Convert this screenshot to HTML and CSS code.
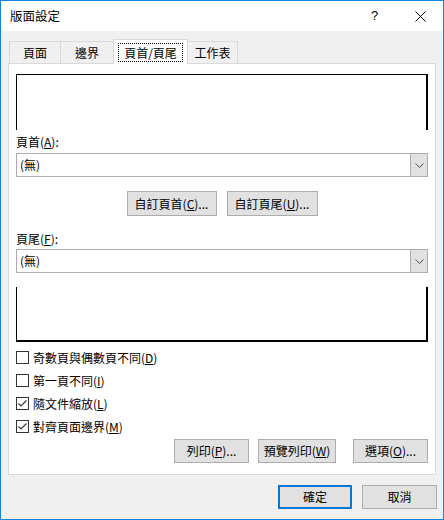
FILE: index.html
```html
<!DOCTYPE html>
<html lang="zh-Hant">
<head>
<meta charset="utf-8">
<title>版面設定</title>
<link rel="stylesheet" href="styles.css">
</head>
<body>
<div class="window">
  <div class="titlebar">
    <span class="title">版面設定</span>
    <span class="help">?</span>
    <span class="close">
      <svg width="11" height="11" viewBox="0 0 11 11"><path d="M0.5 0.5 L10.5 10.5 M10.5 0.5 L0.5 10.5" stroke="#000" stroke-width="1" fill="none"/></svg>
    </span>
  </div>
  <div class="content">
    <div class="tabs">
      <div class="tab t1">頁面</div>
      <div class="tab t2">邊界</div>
      <div class="tab t3 active"><span class="focus">頁首/頁尾</span></div>
      <div class="tab t4">工作表</div>
    </div>
    <div class="panel">
      <div class="preview header-preview"></div>
      <div class="label label-head">頁首(<u>A</u>):</div>
      <div class="select">
        <span class="select-text">(無)</span>
        <span class="select-btn">
          <svg width="9" height="5" viewBox="0 0 9 5"><path d="M0.5 0.5 L4.5 4.5 L8.5 0.5" stroke="#555" stroke-width="1" fill="none"/></svg>
        </span>
      </div>
      <div class="custom-row">
        <div class="btn custom">自訂頁首(<u>C</u>)...</div>
        <div class="btn custom">自訂頁尾(<u>U</u>)...</div>
      </div>
      <div class="label label-foot">頁尾(<u>F</u>):</div>
      <div class="select select-foot">
        <span class="select-text">(無)</span>
        <span class="select-btn">
          <svg width="9" height="5" viewBox="0 0 9 5"><path d="M0.5 0.5 L4.5 4.5 L8.5 0.5" stroke="#555" stroke-width="1" fill="none"/></svg>
        </span>
      </div>
      <div class="preview footer-preview"></div>
      <div class="checks">
        <div class="check"><span class="box"></span><span>奇數頁與偶數頁不同(<u>D</u>)</span></div>
        <div class="check"><span class="box"></span><span>第一頁不同(<u>I</u>)</span></div>
        <div class="check"><span class="box"><svg width="11" height="11" viewBox="0 0 11 11"><path d="M1.5 5.5 L4 8 L9.5 2.5" stroke="#333" stroke-width="1.1" fill="none"/></svg></span><span>隨文件縮放(<u>L</u>)</span></div>
        <div class="check"><span class="box"><svg width="11" height="11" viewBox="0 0 11 11"><path d="M1.5 5.5 L4 8 L9.5 2.5" stroke="#333" stroke-width="1.1" fill="none"/></svg></span><span>對齊頁面邊界(<u>M</u>)</span></div>
      </div>
      <div class="print-row">
        <div class="btn b-print">列印(<u>P</u>)...</div>
        <div class="btn b-preview">預覽列印(<u>W</u>)</div>
        <div class="btn b-options">選項(<u>O</u>)...</div>
      </div>
    </div>
    <div class="footer">
      <div class="btn ok">確定</div>
      <div class="btn cancel">取消</div>
    </div>
  </div>
</div>
</body>
</html>
```
FILE: styles.css
```css
html, body {
  margin: 0;
  padding: 0;
}
body {
  font-family: "Noto Sans CJK TC", "Microsoft JhengHei", sans-serif;
  font-size: 12px;
  color: #000;
  background: #fff;
}
u {
  text-decoration: underline;
  text-underline-offset: 1px;
}
.window {
  width: 444px;
  height: 520px;
  box-sizing: border-box;
  border: 1px solid #1883d7;
  background: #f0f0f0;
  display: flex;
  flex-direction: column;
}
.titlebar {
  height: 30px;
  flex: none;
  background: #fff;
  display: flex;
  align-items: center;
  padding-left: 9px;
  line-height: 16px;
}
.title {
  font-size: 12.5px;
  flex: 1;
}
.help {
  font-family: "Liberation Sans", sans-serif;
  font-size: 13px;
  width: 10px;
  margin-right: 34px;
}
.close {
  width: 11px;
  height: 11px;
  margin-right: 17px;
  display: flex;
}
.content {
  padding: 8px 7px 0 7px;
}
.tabs {
  display: flex;
  align-items: flex-end;
  height: 24px;
  margin-left: 1px;
}
.tab {
  height: 22px;
  box-sizing: border-box;
  border: 1px solid #d9d9d9;
  border-bottom: none;
  background: #f0f0f0;
  display: flex;
  align-items: center;
  justify-content: center;
  margin-right: -1px;
  line-height: 16px;
}
.t1 { width: 52px; }
.t2 { width: 54px; }
.t3 { width: 75px; }
.t4 { width: 51px; }
.tab.active {
  height: 25px;
  margin-bottom: -1px;
  background: #fff;
  position: relative;
  z-index: 2;
  align-items: flex-start;
  padding-top: 3px;
}
.focus {
  border: 1px dotted #000;
  padding: 0 5px;
  line-height: 17px;
  height: 17px;
  width: 53px;
  text-align: center;
}
.panel {
  width: 428px;
  height: 412px;
  box-sizing: border-box;
  border: 1px solid #d9d9d9;
  background: #fff;
  padding: 10px 7px 0 7px;
  display: flex;
  flex-direction: column;
}
.preview {
  width: 412px;
  box-sizing: border-box;
  border-color: #000;
  border-style: solid;
}
.header-preview {
  height: 56px;
  border-width: 1px 2px 0 1px;
}
.footer-preview {
  height: 55px;
  margin-top: 14px;
  border-width: 0 2px 2px 1px;
}
.label {
  line-height: 16px;
  height: 16px;
}
.label-head {
  margin-top: 4px;
}
.select {
  margin-top: 3px;
  height: 24px;
  box-sizing: border-box;
  border: 1px solid #adadad;
  display: flex;
  align-items: center;
  background: #fff;
}
.select-text {
  flex: 1;
  padding-left: 3px;
  line-height: 16px;
}
.select-btn {
  width: 17px;
  height: 22px;
  box-sizing: border-box;
  border-left: 1px solid #adadad;
  background: #e1e1e1;
  display: flex;
  align-items: center;
  justify-content: center;
}
.select-foot {
  margin-top: 2px;
}
.btn {
  height: 24px;
  box-sizing: border-box;
  border: 1px solid #adadad;
  background: #e1e1e1;
  display: flex;
  align-items: center;
  justify-content: center;
  line-height: 16px;
}
.custom-row {
  display: flex;
  justify-content: center;
  gap: 10px;
  margin-top: 14px;
}
.btn.custom {
  height: 25px;
  width: 90px;
}
.custom-row .custom:last-child {
  width: 91px;
}
.label-foot {
  margin-top: 15px;
}
.checks {
  margin-top: 4px;
  display: flex;
  flex-direction: column;
}
.check {
  height: 23px;
  display: flex;
  align-items: center;
  gap: 4px;
  line-height: 16px;
}
.box {
  width: 13px;
  height: 13px;
  box-sizing: border-box;
  border: 1px solid #333;
  background: #fff;
  display: flex;
  align-items: center;
  justify-content: center;
}
.print-row {
  display: flex;
  justify-content: flex-end;
  margin-top: 1px;
}
.b-print { width: 75px; }
.b-preview { width: 78px; margin-left: 9px; }
.b-options { width: 75px; margin-left: 17px; }
.footer {
  display: flex;
  justify-content: flex-end;
  gap: 10px;
  padding: 10px 0 0 0;
  margin-right: -1px;
}
.btn.ok {
  width: 74px;
  border: 2px solid #0078d7;
}
.btn.cancel {
  width: 75px;
}
```
